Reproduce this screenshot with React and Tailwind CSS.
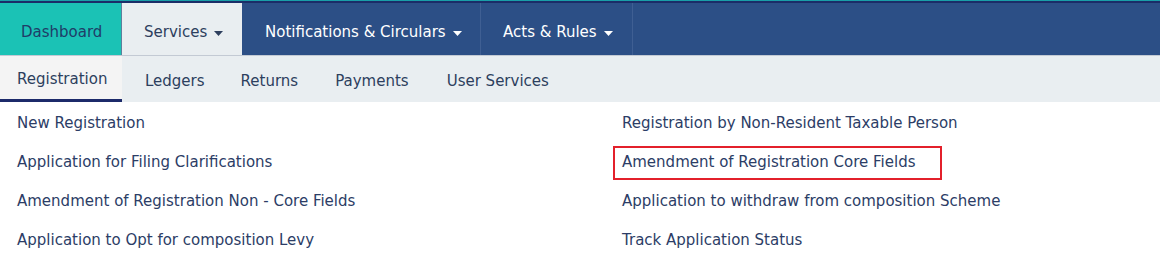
import React from "react";

const Caret = ({ color }) => (
  <svg width="9" height="5" viewBox="0 0 9 5" className="ml-[7px] mt-[2px]" aria-hidden="true">
    <path d="M0 0 L9 0 L4.5 5 Z" fill={color} />
  </svg>
);

export default function App() {
  const left = [
    "New Registration",
    "Application for Filing Clarifications",
    "Amendment of Registration Non - Core Fields",
    "Application to Opt for composition Levy",
  ];
  const right = [
    "Registration by Non-Resident Taxable Person",
    "Amendment of Registration Core Fields",
    "Application to withdraw from composition Scheme",
    "Track Application Status",
  ];
  return (
    <div
      className="w-[1160px] h-[255px] bg-white overflow-hidden text-[15px]"
      style={{ fontFamily: '"DejaVu Sans", Verdana, sans-serif' }}
    >
      {/* top bar */}
      <div className="border-t border-[#1a9fa8]">
        <div className="border-t-2 border-[#1b2d68] bg-[#2c4f86] border-b border-b-[#c3cad4] flex h-[55px]">
          <div className="w-[122px] bg-[#1bc2b5] border-r border-[#5f7f9c] flex items-center pt-[6px] pl-[21px] text-[#1f3d68]">
            Dashboard
          </div>
          <div className="w-[120px] bg-[#e9eef1] flex items-center pt-[6px] pl-[22px] text-[#2d3f5e]">
            Services
            <Caret color="#2d3f5e" />
          </div>
          <div className="w-[239px] border-r border-[#3f5f93] flex items-center pt-[6px] pl-[23px] text-white">
            Notifications &amp; Circulars
            <Caret color="#ffffff" />
          </div>
          <div className="w-[152px] border-r border-[#3f5f93] flex items-center pt-[6px] pl-[22px] text-white">
            Acts &amp; Rules
            <Caret color="#ffffff" />
          </div>
          <div className="flex-1" />
        </div>
      </div>

      {/* sub nav */}
      <div className="flex h-[46px] bg-[#e9eef1] text-[#2d3f5e]">
        <div className="w-[122px] bg-[#f4f4f4] border-b-[3px] border-[#1c2a6a] flex items-center pt-[4px] pl-[17px]">
          Registration
        </div>
        <div className="flex items-center pt-[4px] pl-[23px] pr-[18px]">Ledgers</div>
        <div className="flex items-center pt-[4px] px-[18px]">Returns</div>
        <div className="flex items-center pt-[4px] px-[19px]">Payments</div>
        <div className="flex items-center pt-[4px] px-[19px]">User Services</div>
      </div>

      {/* links */}
      <div className="flex text-[#2c3d66] pt-[2px]">
        <div className="w-[622px] pl-[17px] flex flex-col">
          {left.map((t) => (
            <div key={t} className="h-[39px] flex items-center">
              {t}
            </div>
          ))}
        </div>
        <div className="flex flex-col">
          {right.map((t, i) => (
            <div key={t} className="h-[39px] flex items-center">
              {i === 1 ? (
                <span className="ml-[-9px] h-[34px] flex items-center pl-[7px] pr-[24px] border-2 border-[#e3202b]">
                  {t}
                </span>
              ) : (
                t
              )}
            </div>
          ))}
        </div>
      </div>
    </div>
  );
}
